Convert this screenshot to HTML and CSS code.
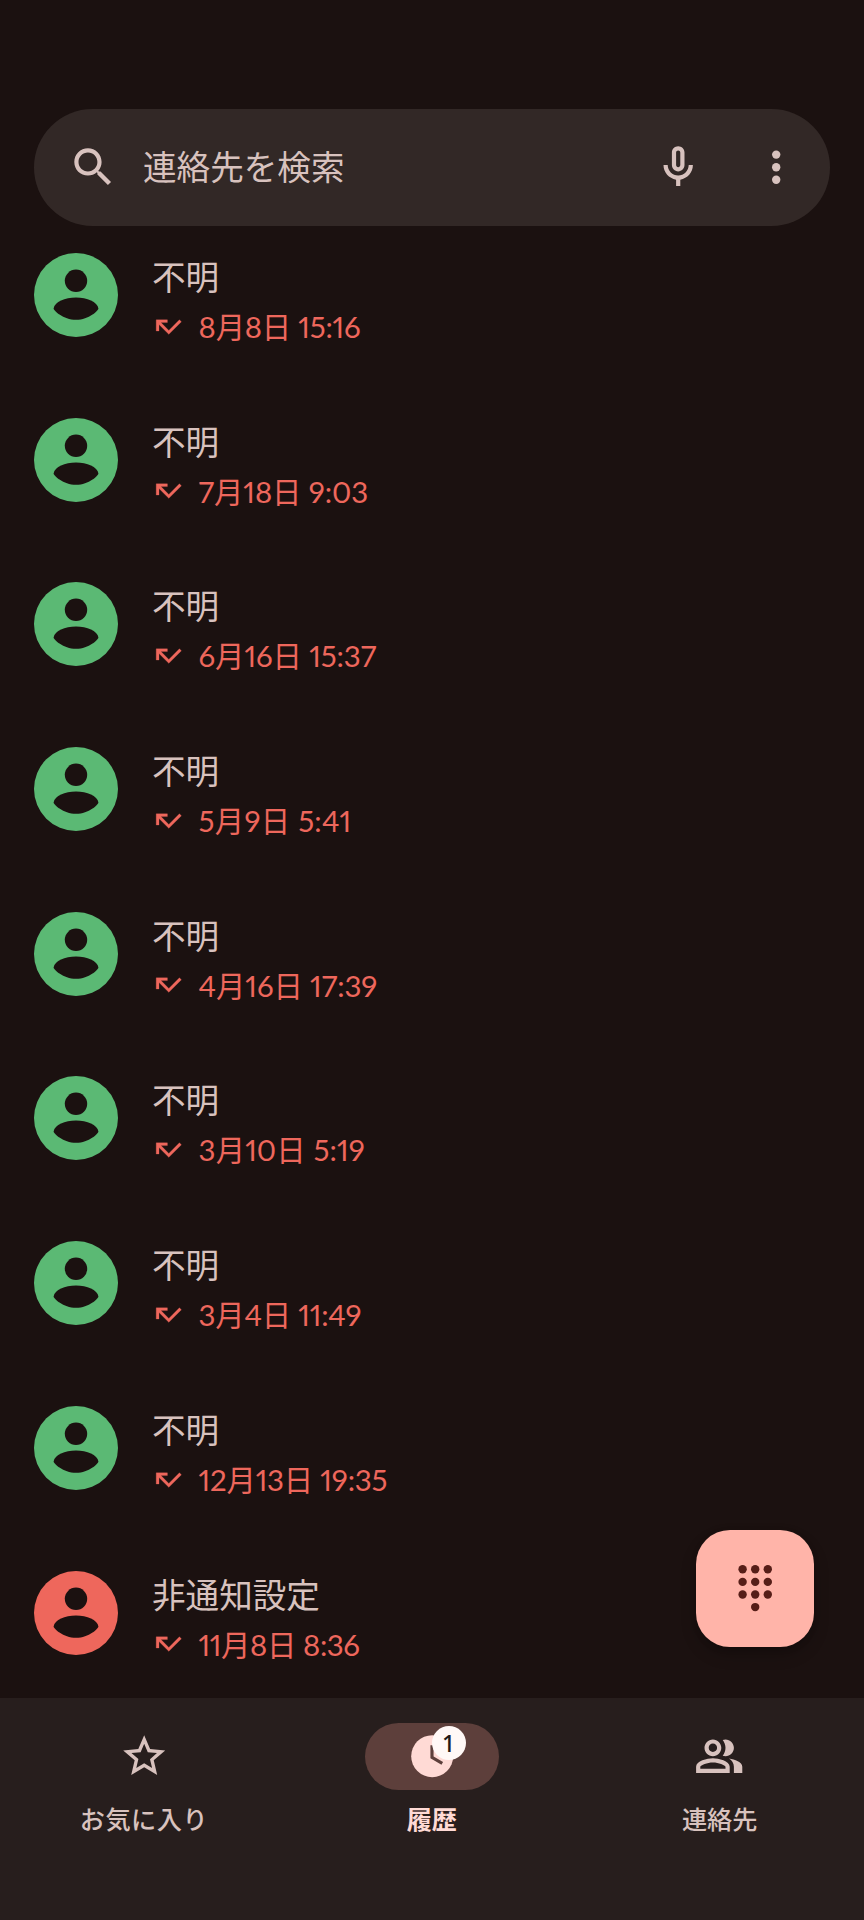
FILE: index.html
```html
<!DOCTYPE html>
<html lang="ja">
<head>
<meta charset="utf-8">
<title>履歴</title>
<link rel="stylesheet" href="styles.css">
</head>
<body>
<svg class="defs" width="0" height="0">
  <symbol id="avatar" viewBox="0 0 84 84">
    <circle cx="42" cy="42" r="42" fill="currentColor"/>
    <circle class="cut" cx="42" cy="27.8" r="11.2"/>
    <path class="cut" d="M19.6 55.4C20.6 48.6 31 44.4 42 44.4S63.4 48.6 64.4 55.4C64.4 57.3 55 66.7 42 66.7S19.6 57.3 19.6 55.4z"/>
  </symbol>
  <symbol id="missed" viewBox="0 0 24 24">
    <path fill="currentColor" stroke="currentColor" stroke-width=".2" d="M19.59 7L12 14.59 6.41 9H11V7H3v8h2v-4.59l7 7 9-9z"/>
  </symbol>
</svg>
<div class="screen">
  <header class="search">
    <svg class="icon" viewBox="0 0 24 24"><path d="M15.5 14h-.79l-.28-.27C15.41 12.59 16 11.11 16 9.5 16 5.91 13.09 3 9.5 3S3 5.91 3 9.5 5.91 16 9.5 16c1.61 0 3.09-.59 4.23-1.57l.27.28v.79l5 4.99L20.49 19l-4.99-5zm-6 0C7.01 14 5 11.99 5 9.5S7.01 5 9.5 5 14 7.01 14 9.5 11.99 14 9.5 14z"/></svg>
    <span class="search-label">連絡先を検索</span>
    <svg class="icon mic" viewBox="0 0 24 24"><path d="M12 14c1.66 0 3-1.34 3-3V5c0-1.66-1.34-3-3-3S9 3.34 9 5v6c0 1.66 1.34 3 3 3zm-1-9c0-.55.45-1 1-1s1 .45 1 1v6c0 .55-.45 1-1 1s-1-.45-1-1V5zm6 6c0 2.76-2.24 5-5 5s-5-2.24-5-5H5c0 3.53 2.61 6.43 6 6.92V21h2v-3.08c3.39-.49 6-3.39 6-6.92h-2z"/></svg>
    <svg class="icon" viewBox="0 0 24 24"><circle cx="12" cy="6" r="2"/><circle cx="12" cy="12" r="2"/><circle cx="12" cy="18" r="2"/></svg>
  </header>

  <main class="calls">
    <div class="call"><svg class="avatar"><use href="#avatar"/></svg><div class="info"><div class="name">不明</div><div class="date"><svg class="missed"><use href="#missed"/></svg><span>8月8日 15:16</span></div></div></div>
    <div class="call"><svg class="avatar"><use href="#avatar"/></svg><div class="info"><div class="name">不明</div><div class="date"><svg class="missed"><use href="#missed"/></svg><span>7月18日 9:03</span></div></div></div>
    <div class="call"><svg class="avatar"><use href="#avatar"/></svg><div class="info"><div class="name">不明</div><div class="date"><svg class="missed"><use href="#missed"/></svg><span>6月16日 15:37</span></div></div></div>
    <div class="call"><svg class="avatar"><use href="#avatar"/></svg><div class="info"><div class="name">不明</div><div class="date"><svg class="missed"><use href="#missed"/></svg><span>5月9日 5:41</span></div></div></div>
    <div class="call"><svg class="avatar"><use href="#avatar"/></svg><div class="info"><div class="name">不明</div><div class="date"><svg class="missed"><use href="#missed"/></svg><span>4月16日 17:39</span></div></div></div>
    <div class="call"><svg class="avatar"><use href="#avatar"/></svg><div class="info"><div class="name">不明</div><div class="date"><svg class="missed"><use href="#missed"/></svg><span>3月10日 5:19</span></div></div></div>
    <div class="call"><svg class="avatar"><use href="#avatar"/></svg><div class="info"><div class="name">不明</div><div class="date"><svg class="missed"><use href="#missed"/></svg><span>3月4日 11:49</span></div></div></div>
    <div class="call"><svg class="avatar"><use href="#avatar"/></svg><div class="info"><div class="name">不明</div><div class="date"><svg class="missed"><use href="#missed"/></svg><span>12月13日 19:35</span></div></div></div>
    <div class="call private"><svg class="avatar"><use href="#avatar"/></svg><div class="info"><div class="name">非通知設定</div><div class="date"><svg class="missed"><use href="#missed"/></svg><span>11月8日 8:36</span></div></div></div>
  </main>

  <button class="fab" aria-label="キーパッド">
    <svg class="icon" viewBox="0 0 24 24"><circle cx="6" cy="3" r="2"/><circle cx="12" cy="3" r="2"/><circle cx="18" cy="3" r="2"/><circle cx="6" cy="9" r="2"/><circle cx="12" cy="9" r="2"/><circle cx="18" cy="9" r="2"/><circle cx="6" cy="15" r="2"/><circle cx="12" cy="15" r="2"/><circle cx="18" cy="15" r="2"/><circle cx="12" cy="21" r="2"/></svg>
  </button>

  <nav class="nav">
    <div class="tab favorites">
      <div class="pill"><svg class="icon" viewBox="0 0 24 24"><path d="M22 9.24l-7.19-.62L12 2 9.19 8.63 2 9.24l5.46 4.73L5.82 21 12 17.27 18.18 21l-1.63-7.03L22 9.24zM12 15.4l-3.76 2.27 1-4.28-3.32-2.88 4.38-.38L12 6.1l1.71 4.04 4.38.38-3.32 2.88 1 4.28L12 15.4z"/></svg></div>
      <span>お気に入り</span>
    </div>
    <div class="tab active">
      <div class="pill"><svg class="icon" viewBox="0 0 24 24"><circle cx="12" cy="12" r="10"/><path class="hand" d="M11.9 6.8V12.5l4.9 2.9"/></svg><span class="badge">1</span></div>
      <span>履歴</span>
    </div>
    <div class="tab">
      <div class="pill"><svg class="icon" viewBox="0 0 24 24"><path d="M16.67 13.13C18.04 14.06 19 15.32 19 17v3h4v-3c0-2.18-3.57-3.47-6.33-3.87zM15 12c2.21 0 4-1.79 4-4s-1.79-4-4-4c-.47 0-.91.1-1.33.24C14.5 5.27 15 6.58 15 8s-.5 2.73-1.33 3.76c.42.14.86.24 1.33.24zM9 12c2.21 0 4-1.79 4-4s-1.79-4-4-4-4 1.79-4 4 1.79 4 4 4zm0-6c1.1 0 2 .9 2 2s-.9 2-2 2-2-.9-2-2 .9-2 2-2zM9 13c-2.67 0-8 1.34-8 4v3h16v-3c0-2.66-5.33-4-8-4zm6 5H3v-.99C3.2 16.29 6.3 15 9 15s5.8 1.29 6 2v1z"/></svg></div>
      <span>連絡先</span>
    </div>
  </nav>
</div>
</body>
</html>
```
FILE: styles.css
```css
* { box-sizing: border-box; }
body {
  margin: 0;
  background: #1b1110;
  color: #d8c2be;
  font-family: "Noto Sans CJK JP", sans-serif;
}
.defs { position: absolute; }
.cut { fill: #1b1110; }
.screen {
  position: relative;
  width: 864px;
  height: 1920px;
  padding-top: 109px;
  overflow: hidden;
  display: flex;
  flex-direction: column;
}
.icon {
  display: block;
  flex: none;
  width: 50.4px;
  height: 50.4px;
  fill: currentColor;
}
.search {
  flex: none;
  display: flex;
  align-items: center;
  height: 117px;
  margin: 0 33.6px;
  padding: 0 29px 0 34px;
  border-radius: 59px;
  background: #322826;
}
.search-label {
  flex: 1;
  margin: 0 0 3px 25px;
  font-size: 33.6px;
  line-height: 48px;
}
.mic { margin-right: 47.2px; }
.calls {
  flex: 1;
  min-height: 0;
  padding: 26.8px 0 0 34px;
}
.call {
  display: flex;
  height: 164.72px;
}
.avatar {
  flex: none;
  width: 84px;
  height: 84px;
  color: #5bb974;
}
.private .avatar { color: #ee675c; }
.info { margin-left: 34px; }
.name {
  font-size: 33.6px;
  line-height: 45px;
}
.date {
  display: flex;
  align-items: center;
  height: 57px;
  color: #ee675c;
  font-family: Lato, "Noto Sans CJK JP", sans-serif;
  font-size: 29.4px;
  font-feature-settings: "pnum";
  letter-spacing: -.1px;
  line-height: 42px;
}
.date span { margin-top: 1px; }
.call:nth-child(4) .date { letter-spacing: .25px; }
.call:nth-child(6) .date { letter-spacing: .1px; }
.call:nth-child(1) .date,
.call:nth-child(7) .date { letter-spacing: -.22px; }
.call:nth-child(8) .date { letter-spacing: -.2px; }
.call:nth-child(9) .date { letter-spacing: -.4px; }
.missed {
  width: 33.6px;
  height: 33.6px;
  margin-right: 13px;
}
.fab {
  position: absolute;
  left: 696px;
  top: 1529.5px;
  display: flex;
  align-items: center;
  justify-content: center;
  width: 117.6px;
  height: 117.6px;
  padding: 0;
  border: 0;
  border-radius: 34px;
  background: #ffb4a9;
  color: #561e18;
  box-shadow: 0 8px 16px rgba(0, 0, 0, .2), 0 2px 6px rgba(0, 0, 0, .12);
}
.nav {
  flex: none;
  display: flex;
  height: 222.3px;
  padding: 25.2px .4px 0 0;
  background: #271e1d;
}
.tab {
  flex: 1;
  display: flex;
  flex-direction: column;
  align-items: center;
  font-size: 25.2px;
  font-weight: 500;
  line-height: 36px;
}
.favorites { letter-spacing: .5px; }
.pill {
  position: relative;
  display: flex;
  align-items: center;
  justify-content: center;
  width: 134.4px;
  height: 67.2px;
  margin-bottom: 10px;
  border-radius: 34px;
}
.active { color: #ffdad5; font-weight: 700; }
.active .pill { background: #5d3f3b; }
.hand { fill: none; stroke: #5d3f3b; stroke-width: 1.5; }
.badge {
  position: absolute;
  left: 67px;
  top: 3px;
  width: 34px;
  height: 34px;
  border-radius: 50%;
  background: #fff8f6;
  color: #201a19;
  font: 500 23px/34px "Noto Sans", sans-serif;
  text-align: center;
}
```
